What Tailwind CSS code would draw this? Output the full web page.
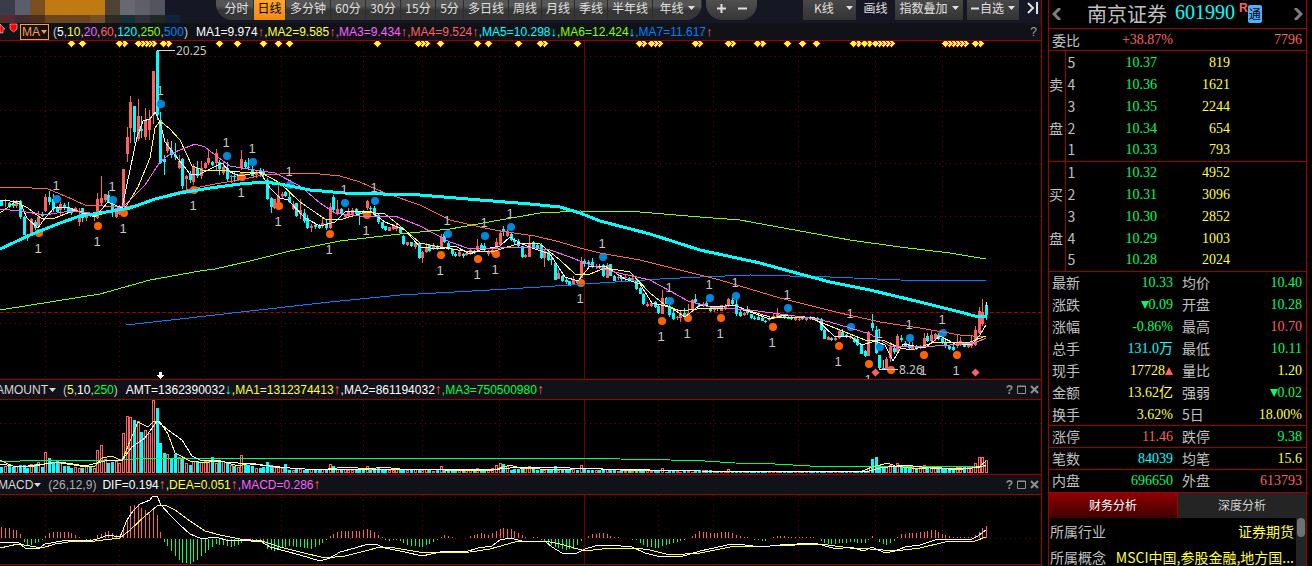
<!DOCTYPE html>
<html lang="zh-CN">
<head>
<meta charset="utf-8">
<title>南京证券 601990</title>
<script src="https://cdn.jsdelivr.net/npm/@tailwindcss/browser@4"></script>
</head>
<body class="min-h-screen bg-black overflow-hidden flex text-xs text-[#c8c8c8] font-['Liberation_Sans','Noto_Sans_CJK_SC',sans-serif]">

<main class="flex-1 min-w-0 flex flex-col border-r border-[#a00000] bg-black">
  <!-- toolbar -->
  <nav class="h-[23px] shrink-0 flex items-start bg-[#151724] whitespace-nowrap text-[#e0e0e0] font-['Noto_Sans_CJK_SC',sans-serif]">
    <div class="w-[216px] shrink-0" aria-hidden="true">
      <div class="flex h-[15px]">
        <i class="w-[15px] bg-[#3a3c48]"></i><i class="w-[15px] bg-[#5a5e6c]"></i><i class="w-[15px] bg-[#7a5020]"></i><i class="w-[60px] bg-[#c07a14]"></i><i class="w-[15px] bg-[#4f4335]"></i><i class="w-[15px] bg-[#676870]"></i><i class="w-[15px] bg-[#5e5f68]"></i><i class="w-[15px] bg-[#54545e]"></i>
      </div>
      <div class="flex h-2">
        <i class="w-[15px] bg-[#5a2830]"></i><i class="w-[15px] bg-[#432a2c]"></i><i class="w-[15px] bg-[#4a2f1c]"></i><i class="w-[45px] bg-[#6b4420]"></i><i class="w-[15px] bg-[#74502a]"></i><i class="w-[15px] bg-[#2f2a22]"></i><i class="w-[15px] bg-[#123238]"></i><i class="w-[15px] bg-[#303038]"></i><i class="w-[15px] bg-[#1e2a20]"></i><i class="w-[15px] bg-[#10233a]"></i>
      </div>
    </div>
    <div class="flex h-5 shrink-0 rounded-b-2xl overflow-hidden bg-linear-to-b from-[#555] from-30% to-[#363636] to-50% *:h-5 *:pb-1 *:border-r *:border-[#2c2c2c]">
      <button class="w-[38px] pl-1">分时</button><button class="w-8 bg-linear-to-b from-[#ffa530] to-[#f08a10] text-black">日线</button><button class="w-[45px]">多分钟</button><button class="w-[35px]">60分</button><button class="w-[35px]">30分</button><button class="w-[35px]">15分</button><button class="w-7">5分</button><button class="w-[45px]">多日线</button><button class="w-[33px]">周线</button><button class="w-[33px]">月线</button><button class="w-[33px]">季线</button><button class="w-[45px]">半年线</button><button class="w-[49px] flex items-center justify-center gap-1">年线<svg width="7" height="4" fill="currentColor"><path d="M0 0h7L3.500 4z"/></svg></button>
    </div>
    <div class="ml-1 w-[51px] h-5 shrink-0 flex items-center justify-center gap-3 rounded-b-2xl bg-linear-to-b from-[#505050] to-[#363636]">
      <button aria-label="放大" class="pb-1"><svg width="9" height="9" stroke="currentColor" stroke-width="2"><path d="M0 4.500h9M4.500 0v9"/></svg></button>
      <button aria-label="缩小" class="pb-1"><svg width="9" height="9" stroke="currentColor" stroke-width="2"><path d="M0 4.500h9"/></svg></button>
    </div>
    <div class="ml-auto mr-0.5 flex h-5 shrink-0 *:h-5 *:pb-1">
      <button class="w-[53px] pl-2 flex items-center justify-center gap-3 bg-linear-to-b from-[#484848] to-[#333]">K线<svg width="7" height="4" fill="currentColor"><path d="M0 0h7L3.500 4z"/></svg></button>
      <button class="w-[39px]">画线</button>
      <button class="w-[68px] flex items-center justify-center gap-1 bg-linear-to-b from-[#484848] to-[#333]">指数叠加<svg width="7" height="4" fill="currentColor"><path d="M0 0h7L3.500 4z"/></svg></button>
      <button class="ml-1 w-[52px] flex items-center justify-center gap-1 bg-linear-to-b from-[#484848] to-[#333]"><span class="flex items-center gap-px"><svg width="8" height="9" stroke="currentColor" stroke-width="2"><path d="M0 4.500h8"/></svg>自选</span><svg width="7" height="4" fill="currentColor"><path d="M0 0h7L3.500 4z"/></svg></button>
      <button aria-label="收起" class="w-5 pl-2"><svg width="12" height="12" fill="none" stroke="currentColor" stroke-width="2"><path d="M1 1l5 5-5 5M10 0v12"/></svg></button>
    </div>
  </nav>

  <!-- moving averages -->
  <header class="h-[17px] shrink-0 flex items-center bg-[#101218] whitespace-nowrap text-white">
    <svg width="20" height="17" class="shrink-0"><path d="M0 1l5 5H3v4H0z" fill="#f00" stroke="#fff" stroke-width=".5"/><path d="M10 1h7v5l-3.500 3L10 6z" fill="#f00" stroke="#fff" stroke-width=".5"/></svg>
    <button class="w-[29px] h-4 flex items-center justify-center gap-px border border-[#ff9a3c] text-[#ff9a3c]">MA<svg width="6" height="4" fill="currentColor"><path d="M0 0h6L3 4z"/></svg></button>
    <p class="ml-1 text-[#c8c8c8]">(<span class="text-white">5</span>,<span class="text-[#ffff40]">10</span>,<span class="text-[#ff60ff]">20</span>,<span class="text-[#ff6060]">60</span>,<span class="text-[#00ffff]">120</span>,<span class="text-[#80ff00]">250</span>,<span class="text-[#0080ff]">500</span>)</p>
    <p class="ml-2">MA1=9.974<b class="text-[13px] leading-3 text-[#ff6060]">↑</b><span class="text-[#ffff40]">,MA2=9.585</span><b class="text-[13px] leading-3 text-[#ff6060]">↑</b><span class="text-[#ff60ff]">,MA3=9.434</span><b class="text-[13px] leading-3 text-[#ff6060]">↑</b><span class="text-[#ff6060]">,MA4=9.524</span><b class="text-[13px] leading-3 text-[#ff6060]">↑</b><span class="text-[#00ffff]">,MA5=10.298</span><b class="text-[13px] leading-3 text-[#00ffff]">↓</b><span class="text-[#80ff00]">,MA6=12.424</span><b class="text-[13px] leading-3 text-[#00ffff]">↓</b><span class="text-[#0080ff]">,MA7=11.617</span><b class="text-[13px] leading-3 text-[#ff6060]">↑</b></p>
    <button class="ml-auto mr-1 text-[#a0a0a0]">?</button>
  </header>
  <svg id="price" class="block w-full h-[340px] shrink-0 border-y border-[#a00000]" role="img" aria-label="K线图"></svg>

  <header class="h-[19px] shrink-0 flex items-center bg-[#101218] whitespace-nowrap text-white">
    <button class="-ml-1 flex items-center gap-px text-[#d8d8d8]">AMOUNT<svg width="7" height="4" fill="currentColor"><path d="M0 0h7L3.500 4z"/></svg></button>
    <p class="ml-[7px] text-[#c8c8c8]">(<span class="text-[#ffff40]">5</span>,<span class="text-white">10</span>,<span class="text-[#00ff40]">250</span>)</p>
    <p class="ml-2">AMT=1362390032<b class="text-sm leading-3 text-[#00ffff]">↓</b><span class="text-[#ffff40]">,MA1=1312374413</span><b class="text-sm leading-3 text-[#ff6060]">↑</b>,MA2=861194032<b class="text-sm leading-3 text-[#ff6060]">↑</b><span class="text-[#00ff40]">,MA3=750500980</span><b class="text-sm leading-3 text-[#ff6060]">↑</b></p>
    <div class="ml-auto mr-0.5 flex items-center gap-1 text-[#909090]"><button class="font-bold">?</button><button aria-label="最大化"><svg width="9" height="9" fill="none" stroke="currentColor"><path d="M.5 1h8v7.500h-8zM.5 1.500h8"/></svg></button><button aria-label="关闭"><svg width="9" height="9" stroke="currentColor" stroke-width="2"><path d="M1 1l7 7M8 1L1 8"/></svg></button></div>
  </header>
  <svg id="amount" class="block w-full h-[76px] shrink-0 border-y border-[#a00000]" role="img" aria-label="成交额"></svg>

  <header class="h-[19px] shrink-0 flex items-center bg-[#101218] whitespace-nowrap text-white">
    <button class="-ml-0.5 flex items-center gap-px text-[#d8d8d8]">MACD<svg width="7" height="4" fill="currentColor"><path d="M0 0h7L3.500 4z"/></svg></button>
    <p class="ml-[7px] text-[#b0b0b0]">(26,12,9)</p>
    <p class="ml-[6px]">DIF=0.194<b class="text-sm leading-3 text-[#ff6060]">↑</b><span class="text-[#ffff40]">,DEA=0.051</span><b class="text-sm leading-3 text-[#ff6060]">↑</b><span class="text-[#ff60ff]">,MACD=0.286</span><b class="text-sm leading-3 text-[#ff6060]">↑</b></p>
    <div class="ml-auto mr-0.5 flex items-center gap-1 text-[#909090]"><button class="font-bold">?</button><button aria-label="最大化"><svg width="9" height="9" fill="none" stroke="currentColor"><path d="M.5 1h8v7.500h-8zM.5 1.500h8"/></svg></button><button aria-label="关闭"><svg width="9" height="9" stroke="currentColor" stroke-width="2"><path d="M1 1l7 7M8 1L1 8"/></svg></button></div>
  </header>
  <svg id="macd" class="block w-full h-[71px] shrink-0 border-y border-[#a00000]" role="img" aria-label="MACD"></svg>
</main>

<!-- quote panel -->
<aside class="ml-[6px] mr-[5px] w-[259px] shrink-0 h-screen overflow-hidden flex flex-col border-x border-[#a00000] text-sm text-[#c0c0c0] font-['Noto_Sans_CJK_SC',sans-serif]">
  <header class="h-7 shrink-0 flex items-center px-[3px]">
    <button aria-label="上一只"><svg width="9" height="12" fill="none" stroke="#808080" stroke-width="3"><path d="M8 0L2 6l6 6"/></svg></button>
    <h1 class="ml-[26px] text-xl leading-7">南京证券</h1>
    <span class="ml-2 -mt-1 text-xl text-[#00ffff] font-['Liberation_Serif',serif]">601990</span>
    <span class="ml-1 mb-3 text-xs font-bold leading-3 text-[#ff6060] font-['Liberation_Sans',sans-serif]">R</span>
    <span class="w-[14px] h-[18px] rounded-xs bg-[#50b0ff] text-black text-xs leading-[17px] text-center">通</span>
    <button class="ml-auto" aria-label="下一只"><svg width="9" height="12" fill="none" stroke="#808080" stroke-width="3"><path d="M1 0l6 6-6 6"/></svg></button>
  </header>
  <div class="h-[23px] shrink-0 flex items-center border-y border-[#a00000] pl-[3px] pr-1 text-[#ff6060]">
    <span class="text-[#c0c0c0]">委比</span>
    <span class="w-[93px] text-right text-sm font-['Liberation_Serif',serif]">+38.87%</span>
    <span class="ml-auto text-sm font-['Liberation_Serif',serif]">7796</span>
  </div>
  <table class="w-full table-fixed leading-[21px] border-collapse">
    <colgroup><col class="w-4"><col class="w-[14px]"><col class="w-[78px]"><col class="w-[73px]"><col></colgroup>
    <tbody id="asks" class="border-b border-[#a00000]"></tbody>
    <tbody id="bids" class="border-b border-[#a00000]"></tbody>
  </table>
  <table class="w-full table-fixed leading-[21px] border-collapse">
    <colgroup><col class="w-[38px]"><col class="w-[86px]"><col class="w-[46px]"><col></colgroup>
    <tbody id="stats"></tbody>
  </table>
  <div class="h-[26px] shrink-0 flex border-t border-[#a00000] text-xs" role="tablist">
    <button role="tab" aria-selected="true" class="flex-1 bg-linear-to-b from-[#900000] to-[#400000] text-white border-r border-[#a00000]">财务分析</button>
    <button role="tab" class="flex-1 bg-[#242424] text-[#d0d0d0]">深度分析</button>
  </div>
  <div class="flex-1 min-h-0 flex overflow-hidden whitespace-nowrap">
    <dl class="flex-1 min-w-0 pl-px leading-[26px]">
      <div class="flex justify-between"><dt>所属行业</dt><dd class="text-[#ffff40]">证券期货</dd></div>
      <div class="flex justify-between"><dt>所属概念</dt><dd class="text-[#ffff40]">MSCI中国,参股金融,地方国...</dd></div>
    </dl>
    <div class="ml-0.5 w-[10px] bg-[#242424] px-px"><div class="h-[19px] rounded-full bg-[#707070]"></div></div>
  </div>
</aside>

<script>
const RED='#ff6060', CY='#00ffff', YE='#ffff40', MG='#ff60ff', GR='#80ff00', BL='#0080ff';
const candles=`1 200 201 206 206 d;5 199 200 201 207 u;9 202 203 207 208 d;13 200 204 206 208 d;16 200 201 206 208 u;20 200 201 217 219 d;24 216 217 235 235 d;27 234 235 238 241 d;31 218 219 235 236 u;35 220 222 228 230 d;38 211 217 226 227 u;42 212 214 216 217 d;45 194 197 211 212 u;49 191 197 202 205 d;53 194 199 209 212 d;57 206 208 212 213 d;60 202 204 210 216 u;64 203 205 208 210 d;68 202 207 211 213 d;71 208 209 213 215 d;75 207 208 211 212 u;79 208 217 222 226 u;82 208 208 218 222 d;86 213 214 218 221 u;90 214 214 216 217 d;94 215 216 217 221 u;97 193 199 218 219 u;101 176 198 203 205 u;105 194 194 200 202 u;108 191 195 202 203 d;112 202 204 211 217 d;116 209 212 217 218 u;119 205 206 214 215 u;123 169 169 206 207 u;127 127 137 154 162 u;130 96 102 128 143 u;134 106 106 132 143 d;138 99 116 139 141 u;141 116 129 131 138 d;145 108 121 137 140 u;149 110 119 130 140 u;153 71 71 115 124 u;157 50 51 115 120 d;160 112 120 163 164 d;164 155 159 162 175 d;167 139 142 151 153 u;171 141 150 155 158 d;175 143 155 157 160 d;179 155 161 168 169 u;182 158 159 186 189 d;186 175 176 179 189 u;190 171 174 180 183 d;193 164 167 182 185 u;197 161 168 176 178 d;201 161 168 176 179 u;205 162 163 168 169 u;208 150 158 163 165 u;212 161 162 165 166 d;216 149 153 163 170 u;219 160 162 169 175 d;223 162 167 173 175 u;227 162 168 179 181 d;231 175 176 177 183 u;234 172 176 177 182 d;238 175 176 180 181 u;241 150 159 168 170 u;245 160 162 167 169 d;248 158 167 168 170 d;252 164 170 176 176 d;256 171 172 175 178 u;260 168 170 174 177 d;263 169 172 175 179 d;267 178 180 199 200 d;271 197 198 207 213 d;274 199 199 208 209 u;278 185 196 204 205 u;282 192 194 196 199 u;285 191 192 196 197 d;289 193 197 202 203 d;293 201 204 209 210 u;296 203 203 216 217 d;300 199 210 214 219 u;304 209 213 221 223 d;307 215 218 228 229 d;311 224 226 228 232 u;315 223 225 227 229 d;319 224 226 228 229 d;322 218 223 226 228 u;326 220 224 228 230 d;330 203 207 228 229 u;333 195 197 210 211 d;337 200 209 213 215 u;341 208 209 214 215 d;345 214 215 217 219 u;348 208 211 216 217 u;352 208 210 215 216 u;356 208 209 214 215 d;359 211 212 214 225 d;363 210 212 214 216 d;367 200 201 208 210 u;370 206 208 209 211 d;374 206 208 215 217 d;378 213 215 222 224 d;382 222 222 228 229 d;385 226 226 230 231 d;389 227 227 231 231 u;393 224 226 229 230 u;396 223 226 229 231 u;400 227 227 233 234 d;403 235 236 244 245 d;407 242 242 245 246 u;411 242 242 246 247 d;415 241 243 247 249 u;419 242 243 258 259 d;422 251 252 258 263 u;426 243 247 252 253 u;429 244 245 251 252 d;433 243 245 248 250 u;437 245 246 248 250 d;441 234 237 247 248 u;444 232 234 242 243 d;448 242 243 249 250 d;452 248 249 254 256 d;455 252 254 256 257 d;459 250 252 256 257 u;463 253 254 256 258 d;466 252 253 255 256 u;470 249 250 254 255 u;474 250 251 253 254 d;477 239 246 250 252 u;481 243 245 249 250 d;484 243 246 250 252 d;488 250 252 254 256 u;492 248 250 254 255 u;496 238 242 248 249 u;500 230 233 245 246 u;503 226 229 232 236 d;507 229 231 236 237 u;511 233 234 240 241 d;514 238 240 242 244 d;518 239 241 246 248 d;522 246 246 257 258 d;525 254 255 257 258 u;529 235 244 257 257 u;533 241 242 248 248 d;537 243 245 249 250 d;541 243 245 258 259 d;544 249 251 258 267 u;548 251 252 260 261 d;551 257 259 260 265 d;555 262 263 280 280 d;558 270 273 279 279 u;562 275 276 281 282 d;566 277 280 282 284 d;569 281 281 286 286 d;573 276 280 285 285 u;577 280 281 283 284 d;581 257 261 278 278 u;584 259 261 264 267 d;588 260 262 264 267 d;592 258 262 266 268 d;596 264 266 267 269 u;599 264 266 268 269 d;603 264 265 276 277 d;607 263 265 278 278 u;610 264 264 276 276 d;614 275 276 281 281 d;618 275 277 278 280 u;621 275 277 279 281 d;625 275 277 278 281 u;629 277 278 280 282 d;632 275 278 281 281 u;636 279 280 289 290 d;640 287 288 294 294 d;643 293 294 304 305 d;647 302 304 306 307 u;651 302 303 306 307 u;655 301 302 307 308 d;658 304 306 313 314 d;662 290 298 314 314 u;666 297 298 304 304 d;669 302 306 315 317 d;673 310 313 319 320 d;677 316 317 318 320 u;680 310 313 318 322 u;684 308 313 315 316 d;688 304 313 315 316 u;692 299 300 309 310 u;695 294 299 302 303 d;699 303 304 306 307 d;703 302 304 306 307 u;706 301 303 306 307 d;710 307 308 311 312 d;714 307 308 310 312 u;717 306 308 309 311 d;721 305 305 311 311 u;725 304 306 308 310 u;728 298 299 306 307 u;732 297 300 304 306 d;736 298 304 314 316 d;740 309 312 316 317 d;744 312 313 315 316 u;747 306 309 313 315 d;751 314 314 318 319 d;754 316 318 319 320 d;758 315 317 320 320 d;762 317 318 321 321 d;765 320 321 322 323 d;769 317 318 320 321 u;773 314 316 319 319 u;777 308 313 317 318 u;780 314 315 317 318 d;784 315 316 318 319 d;788 316 317 319 319 d;791 315 317 319 320 d;795 317 318 320 321 u;799 317 319 320 321 u;802 316 318 319 320 d;806 317 318 320 321 u;810 316 318 319 320 d;813 317 318 320 320 d;817 317 318 320 321 d;821 318 319 330 331 d;824 329 330 339 339 d;828 336 337 340 340 u;831 337 338 340 341 d;835 337 338 340 341 u;839 330 331 338 339 u;842 329 332 336 337 d;846 334 335 337 338 d;850 335 336 338 339 u;854 337 338 342 343 d;857 338 339 345 346 d;861 344 345 354 354 d;865 350 351 356 357 d;868 331 332 356 356 u;872 314 323 328 331 d;876 326 330 353 354 d;879 355 355 368 370 d;883 360 368 369 370 d;886 357 359 369 370 u;890 342 347 358 362 u;894 347 348 352 354 d;897 334 336 352 353 u;901 335 338 340 342 d;905 341 343 346 347 d;909 340 346 348 350 d;912 342 345 350 350 u;916 345 346 349 350 d;920 345 346 348 349 u;924 333 338 347 347 u;927 333 336 341 342 d;931 331 335 341 343 u;935 333 334 339 341 u;938 333 335 339 340 d;942 336 338 342 344 d;945 340 342 346 348 d;949 345 346 349 350 d;953 343 347 350 351 d;957 334 343 346 348 u;960 337 341 344 346 u;964 342 343 347 347 d;968 344 345 347 348 u;971 336 341 346 348 u;975 326 330 345 346 u;979 307 311 333 334 u;982 299 312 324 326 u;986 302 305 315 320 d`
  .split(';').map(s=>{const [x,h,t,b,l,c]=s.split(' ');return{x:+x,h:+h,t:+t,b:+b,l:+l,c:c=='u'?RED:CY}});

const line=(pts,c,w=1)=>`<polyline points="${pts}" fill="none" stroke="${c}" stroke-width="${w}"/>`;
const rect=(x,y,w,h,c)=>`<rect x="${x}" y="${y}" width="${w}" height="${h}" fill="${c}"/>`;
const vgrid=(y1,y2)=>[45,119,204,281,363,422,499,658,713,798,875,942].map(x=>`<path d="M${x}.5 ${y1}V${y2}" stroke="#700000" stroke-dasharray="1 4"/>`).join('')+`<path d="M584.5 ${y1}V${y2}" stroke="#700000"/>`;
const hgrid=ys=>ys.map(y=>`<line x1="0" x2="100%" y1="${y}.5" y2="${y}.5" stroke="#700000" stroke-dasharray="1 4"/>`).join('');
const draw=(id,top,s)=>document.getElementById(id).innerHTML=`<g transform="translate(0 ${-top})" shape-rendering="crispEdges">${s}</g>`;

/* price panel */
let s=vgrid(41,379)+hgrid([56,110,163,216,270,323])+`<line x1="0" x2="100%" y1="312.5" y2="312.5" stroke="#a00000" stroke-dasharray="4 2"/>`;
for(const k of candles) s+=rect(k.x,k.h,1,k.l-k.h,k.c)+rect(k.x-1,k.t,3,Math.max(1,k.b-k.t),k.c);
s+=rect(986,302,1,4,'#fff');
const blue=[[57,199],[113,200],[161,104],[227,156],[253,162],[290,185],[345,203],[375,201],[448,234],[485,236],[511,227],[603,257],[670,301],[710,298],[736,296],[788,308],[851,327],[880,347],[910,338],[943,333]];
const orange=[[39,233],[98,226],[124,213],[194,190],[242,177],[279,206],[330,234],[367,215],[441,255],[478,259],[496,254],[581,283],[662,321],[688,318],[721,318],[773,327],[839,346],[869,364],[891,370],[924,355],[957,355]];
const dot=(p,c)=>`<circle cx="${p[0]}" cy="${p[1]}" r="4" fill="${c}" shape-rendering="auto"/>`;
s+=blue.map(p=>dot(p,'#0088d8')).join('')+orange.map(p=>dot(p,'#ff6400')).join('');
s+=line('0,310 50,302 100,294 150,280 200,271 215,269 250,261 290,251 340,241 400,234 450,229 500,220 540,213 580,211 640,212 700,217 740,220 800,231 850,240 900,247 950,253 986,259',GR);
s+=line('126,325 180,319 250,311 330,302 400,295 490,290 540,287 600,283 660,279 700,277 750,275 830,277 900,280 986,281',BL);
s+=line('0,188 15,187 48,189 65,196 85,205 120,207 140,205 170,194 190,189 215,184 245,179 262,175 280,174 310,173 340,176 360,182 385,193 420,205 450,220 480,227 500,231 535,236 560,242 580,248 600,253 640,260 680,270 720,280 780,298 800,303 840,313 880,322 920,328 960,335 986,337',RED);
s+=line('0,200 20,202 27,218 38,228 45,218 55,207 70,208 85,214 95,217 108,202 122,208 130,170 137,137 143,121 150,119 155,112 160,122 165,142 175,155 190,174 200,174 212,168 222,163 230,172 240,176 260,172 270,188 280,198 288,200 305,218 320,226 335,222 345,212 370,211 385,222 405,230 420,247 440,249 455,246 470,254 480,250 500,246 510,237 520,243 532,248 550,254 565,277 578,281 590,266 605,266 625,279 640,284 652,303 670,307 685,317 700,305 715,307 735,305 750,312 770,319 785,315 815,318 835,337 850,336 862,345 875,341 885,345 893,361 903,344 925,348 940,336 955,344 972,344 980,335 986,325','#fff');
s+=line('0,213 15,202 28,208 42,219 55,218 75,210 95,216 108,212 125,208 138,187 150,158 155,128 160,121 170,129 180,140 192,166 205,171 220,170 240,172 260,172 280,183 300,202 325,219 340,220 365,212 385,214 405,230 420,243 440,247 470,252 495,251 520,243 540,244 560,260 575,274 590,274 605,268 630,272 650,293 665,305 680,311 705,308 730,308 750,311 770,317 810,318 840,330 865,340 885,341 900,348 912,350 935,342 970,342 986,336',YE);
s+=line('0,209 20,211 45,215 70,211 90,213 105,213 125,205 145,185 160,162 170,154 185,148 195,144 205,147 215,155 230,166 255,170 275,173 300,186 320,203 335,213 360,216 395,216 420,226 450,242 470,249 500,248 530,247 550,250 570,257 585,263 610,271 650,280 670,291 688,301 710,307 750,310 780,314 810,318 830,322 850,328 870,334 890,346 920,347 950,345 975,343 986,338',MG);
s+=line('0,249 30,235 60,223 80,216 100,213 130,208 155,199 180,193 210,188 240,184 265,182 280,184 310,190 345,193 420,195 480,200 530,204 560,207 580,213 600,221 650,234 700,250 760,263 800,274 830,282 870,290 920,302 960,312 975,316 986,316',CY,3);
const one=(x,y)=>`<text x="${x}" y="${y}" fill="#c8c8c8" text-anchor="middle" font-size="13">1</text>`;
s+=blue.map(p=>one(p[0]-1,p[1]-9)).join('')+orange.filter(p=>p[0]!=891).map(p=>one(p[0]-1,p[1]+20)).join('');
const dia=(x,y,c,st)=>`<path d="M${x-4} ${y}l4-4 4 4-4 4z" fill="${c}" stroke="${st}" shape-rendering="auto"/>`;
s+=[82,71,124,119,153,149,146,142,138,168,163,219,237,263,278,289,377,426,422,418,440,477,488,518,544,540,577,643,639,659,655,651,699,695,732,728,762,757,787,802,816,858,853,869,864,891,887,883,879,875,965,961,957,953,949,945,980,975].map(x=>dia(x+.5,43.5,YE,'#a00000')).join('');
s+=dia(875.5,372.5,RED,'none')+dia(975.5,372.5,RED,'none');
s+=`<path d="M157 50.5H175M879 369.5H898" stroke="#d8d8d8"/><g fill="#c8c8c8" font-size="12" font-family="Noto Sans, sans-serif"><text x="176" y="55">20.25</text><text x="899" y="374">8.26</text></g>`;
s+=`<path d="M159 372h3v3h2l-3.500 4-3.500-4h2z" fill="#fff"/>`;
draw('price',41,s);

/* deterministic pseudo-random series for small bars */
let seed=7; const rnd=()=>(seed=(seed*16807)%2147483647)/2147483647;
const interp=(k,x)=>{for(let i=1;i<k.length;i++)if(x<=k[i][0]){const[a,b]=k[i-1],[c,d]=k[i];return b+(d-b)*(x-a)/(c-a)}return k[k.length-1][1]};
const head=[6,7,7,6,7,8,8,5,9,9,11,6,21,15,11,13,10,7,7,5,6,5,5,7,6,5,23,28,14,10,11,12,10,40,57,56,53,52,41,43,40,73,65,30,20,19,15,19,16,14,10,8,12,12,11,12,12,16,10,13,12,11,8,7,6,18,9,8,7,5,5,6,11,8,6,6,5,9,3];
const fixed={330:9,333:7,367:7,378:6,441:7,477:5,496:8,500:10,503:9,507:7,529:7,555:7,581:8,662:5,728:4,868:5,872:14,876:16,879:8,883:5,886:6,890:8,894:6,897:10,901:7,905:6,924:8,927:6,935:6,957:6,971:6,975:10,979:16,982:16,986:13};
const env=[[300,4],[420,3],[500,4],[600,3],[700,2],[760,1],[860,1],[880,5],[900,6],[950,4],[986,8]];
s=vgrid(400,474)+hgrid([423]);
candles.forEach((k,i)=>{const h=i<head.length?head[i]:fixed[k.x]||Math.max(1,Math.round(interp(env,k.x)-1+rnd()*2));
  const c=i==candles.length-1?RED:k.c;
  s+=c==RED&&h>2?`<rect x="${k.x-.5}" y="${473.5-h}" width="2" height="${h-1}" fill="none" stroke="${RED}"/>`:rect(k.x-1,473-h,3,h,c)});
s+=line('0,461 20,461 22,460 120,460 148,458 590,458 620,459 670,460 705,461 735,463 775,464 810,466 865,466 985,467','#00ff40');
s+=line('0,460 8,464 16,467 35,466 55,462 80,466 95,466 102,458 112,456 122,461 128,446 138,422 148,427 154,421 160,422 168,434 175,453 190,461 205,463 218,460 238,466 250,463 275,467 320,470 345,467 370,469 382,467 400,469 490,471 500,468 510,465 520,468 560,470 585,468 620,470 700,471 860,472 872,467 888,463 895,466 920,469 935,467 955,470 972,468 980,466 986,461',YE);
s+=line('0,464 20,467 60,462 85,466 105,461 122,460 132,447 145,438 157,421 168,430 182,440 192,456 200,460 225,462 250,464 290,468 320,470 370,469 490,470 510,468 540,467 600,469 700,471 865,472 880,468 905,465 930,468 965,469 980,467 986,465','#fff');
draw('amount',400,s);

/* MACD panel */
const hist=[[0,11],[4,10],[8,10],[12,8],[16,8],[20,4],[23,-2],[27,-6],[31,-6],[35,-4],[39,-3],[43,0],[49,5],[53,6],[68,6],[75,3],[82,0],[86,-2],[93,-1],[97,3],[108,7],[116,3],[120,0],[123,9],[127,19],[130,32],[138,34],[142,29],[146,27],[150,23],[153,29],[157,23],[160,6],[162,-1],[164,-3],[168,-9],[175,-17],[182,-24],[190,-25],[197,-21],[208,-11],[215,-5],[231,-8],[238,-6],[245,-1],[256,-2],[262,-3],[268,-11],[275,-12],[282,-9],[290,-7],[298,-8],[312,-10],[320,-6],[326,-1],[331,3],[335,5],[340,7],[361,7],[366,9],[371,8],[378,3],[383,0],[388,-2],[397,-1],[407,-6],[422,-8],[433,-3],[439,0],[445,3],[455,0],[466,0],[479,5],[488,3],[495,6],[503,10],[510,9],[520,4],[526,0],[536,1],[544,-3],[556,-8],[564,-11],[573,-10],[580,-3],[585,1],[593,4],[603,5],[614,1],[625,0],[636,-1],[645,-8],[657,-9],[670,-5],[690,0],[698,7],[712,5],[728,6],[740,2],[750,0],[757,-1],[765,-2],[770,0],[778,2],[790,1],[815,1],[820,-1],[826,-5],[835,-5],[850,-3],[860,-4],[864,-5],[869,0],[872,2],[877,-1],[880,-4],[886,-6],[895,-1],[900,4],[915,5],[934,8],[944,3],[955,1],[972,1],[979,6],[983,11],[986,12]];
s=vgrid(495,564)+hgrid([497,538]);
for(const k of candles){const h=Math.round(interp(hist,k.x));if(h>0)s+=rect(k.x,538-h,1,h,RED);else if(h<0)s+=rect(k.x,539,1,-h,'#00ff60')}
s+=line('0,548 18,544 42,548 55,544 75,541 95,541 120,538 130,530 145,516 157,506 165,505 175,510 190,521 205,531 220,535 240,539 262,541 280,547 300,552 325,558 345,556 365,551 380,547 395,548 425,553 470,552 490,549 515,542 545,541 560,544 585,551 610,548 635,548 650,550 670,555 700,553 730,547 770,546 820,544 850,548 870,549 895,551 920,548 945,542 975,541 986,537',YE);
s+=line('0,543 18,542 25,548 38,549 45,544 68,540 90,541 100,538 108,535 120,537 127,520 133,511 140,504 150,500 153,496 157,496 161,505 170,515 180,525 190,534 202,539 215,537 230,541 240,540 262,542 270,547 285,551 300,555 320,561 330,558 340,552 355,548 368,544 378,545 385,548 405,552 422,556 445,551 465,552 478,548 492,546 500,540 510,538 522,541 545,541 552,547 562,553 575,554 585,549 595,546 610,545 632,547 645,553 657,556 680,557 700,551 732,544 745,545 760,547 780,545 815,543 825,546 837,549 850,547 864,551 872,547 885,553 895,551 905,547 920,545 935,540 945,539 970,540 978,536 986,530','#fff');
draw('macd',495,s);

/* order book and statistics */
const num="text-right font-['Liberation_Serif','Noto_Sans_CJK_SC',serif]";
const book=(id,side,rows)=>document.getElementById(id).innerHTML=rows.map((r,i)=>`<tr class="h-[22px]"><th class="font-normal text-left border-r border-[#a00000]">${i==1?side:i==3?'盘':''}</th><td class="pl-0.5">${r[0]}</td><td class="${num} text-[#00ff60]">${r[1]}</td><td class="${num} text-[#ffff40]">${r[2]}</td><td></td></tr>`).join('');
book('asks','卖',[[5,'10.37',819],[4,'10.36',1621],[3,'10.35',2244],[2,'10.34',654],[1,'10.33',793]]);
book('bids','买',[[1,'10.32',4952],[2,'10.31',3096],[3,'10.30',2852],[4,'10.29',1003],[5,'10.28',2024]]);
const C={g:'text-[#00ff60]',r:'text-[#ff6060]',y:'text-[#ffff40]',c:'text-[#00ffff]'};
const dn='<svg class="inline align-baseline" width="8" height="8" fill="currentColor"><path d="M0 0h8L4 8z"/></svg>',up='<svg class="inline align-baseline" width="8" height="8" fill="#ff6060"><path d="M0 8h8L4 0z"/></svg>';
document.getElementById('stats').innerHTML=[
['最新','10.33','g','均价','10.40','g'],['涨跌',dn+'0.09','g','开盘','10.28','g'],['涨幅','-0.86%','g','最高','10.70','r'],['总手','131.0万','c','最低','10.11','g'],['现手','17728'+up,'y','量比','1.20','y'],['金额','13.62亿','y','强弱',dn+'0.02','g'],['换手','3.62%','y','5日','18.00%','y'],['涨停','11.46','r','跌停','9.38','g'],['笔数','84039','c','均笔','15.6','y'],['内盘','696650','g','外盘','613793','r']
].map((r,i)=>`<tr class="h-[22px] ${i>6?'border-t border-[#a00000]':''}"><th class="font-normal text-left pl-[3px]">${r[0]}</th><td class="${num} ${C[r[2]]}">${r[1]}</td><th class="font-normal text-left pl-[9px]">${r[3]}</th><td class="${num} pr-1 ${C[r[5]]}">${r[4]}</td></tr>`).join('');
</script>
</body>
</html>
